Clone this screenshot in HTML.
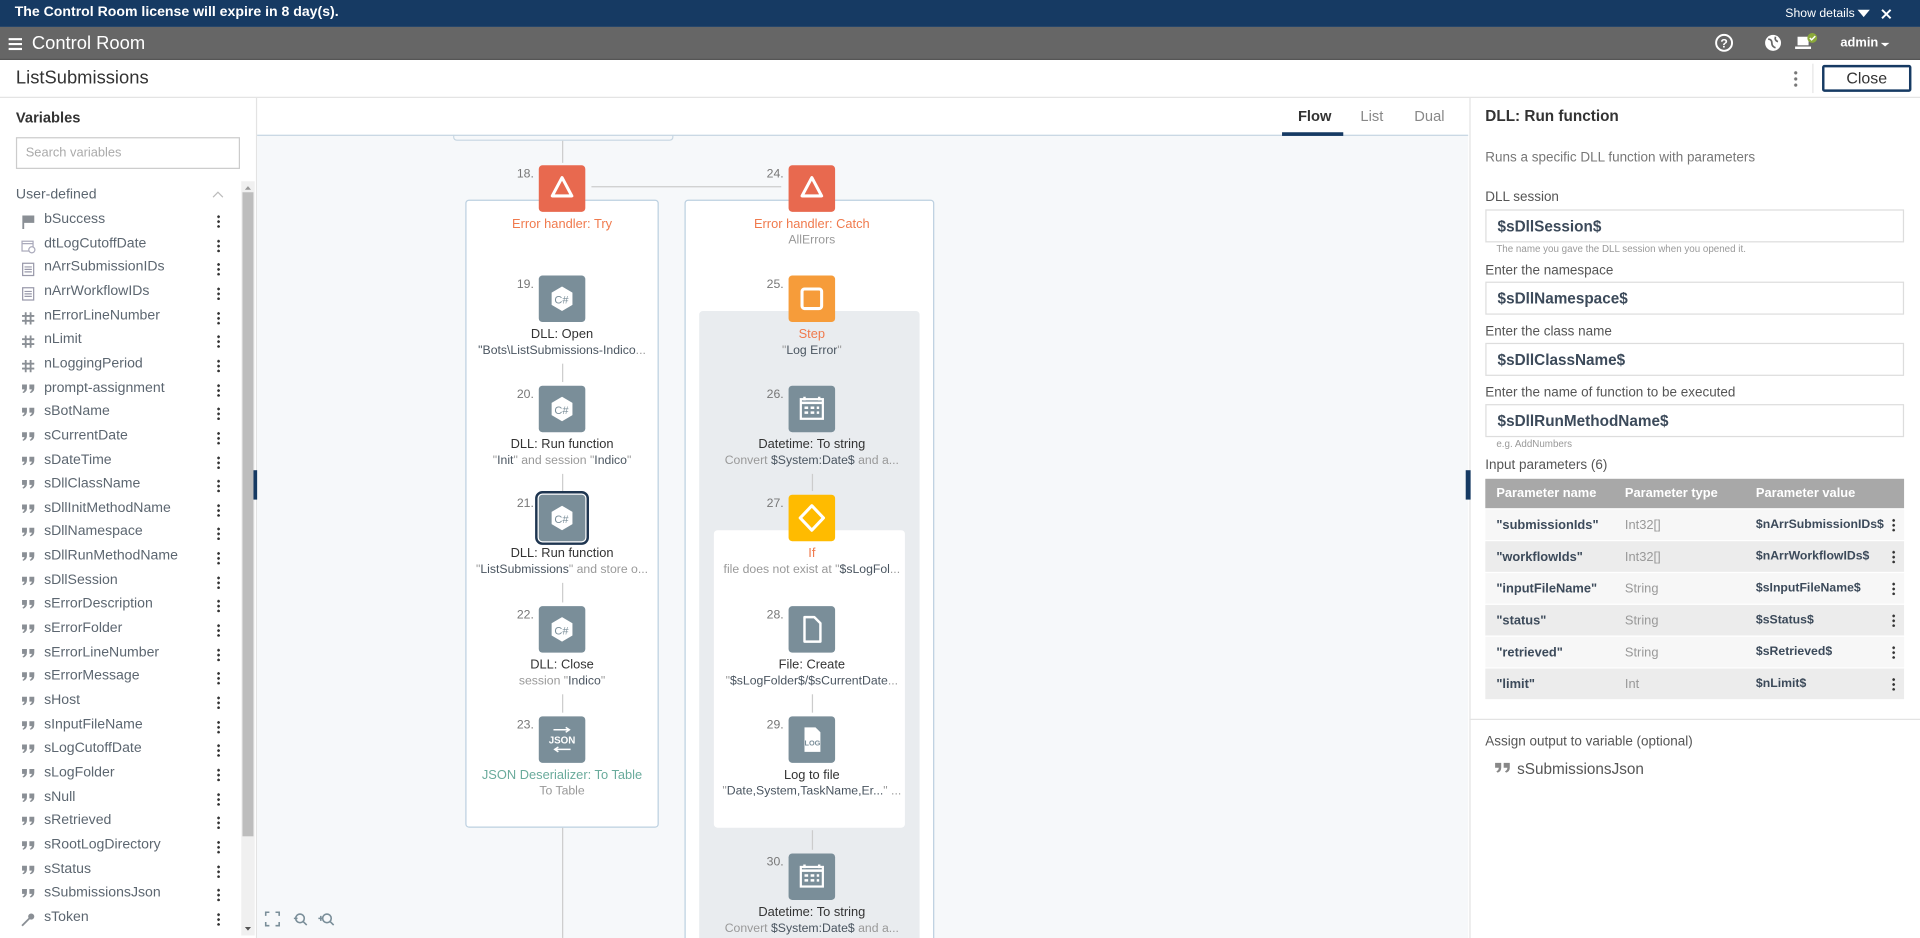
<!DOCTYPE html>
<html><head><meta charset="utf-8">
<style>
*{box-sizing:border-box;margin:0;padding:0}
html,body{width:1920px;height:937px;overflow:hidden;background:#fff}
#s{position:absolute;left:0;top:0;width:1568px;height:766px;overflow:hidden;transform:scale(1.22449);transform-origin:0 0;font-family:"Liberation Sans",sans-serif;color:#333;font-size:11px}
.a{position:absolute}
.var{position:absolute;left:36px;font-size:11.5px;color:#5c6670}
.vi{position:absolute;left:17px}
.kb{position:absolute;left:177px;width:3px;height:11px;background:radial-gradient(circle,#333 1px,transparent 1.2px) 0 0/3px 4px repeat-y}
.ic{position:absolute;width:38px;height:38px;border-radius:3px;background:#7a8e99}
.num{position:absolute;width:30px;text-align:right;font-size:10px;color:#777}
.tt{position:absolute;width:200px;text-align:center;font-size:10.5px;color:#333}
.st{position:absolute;width:200px;text-align:center;font-size:10px;color:#999;white-space:nowrap}
.st b{color:#4a5560;font-weight:normal}
.lbl{position:absolute;left:1213px;font-size:11px;color:#555}
.inp{position:absolute;left:1213px;width:342px;height:27px;border:1px solid #ddd;padding:6px 9px;font-size:12.5px;color:#3c4a5a;font-weight:bold}
.hint{position:absolute;left:1222px;font-size:8px;color:#999}
.row{position:absolute;left:1213px;width:342px;height:25px;font-size:10.5px}
.row span{position:absolute;top:7px}
.arr{position:absolute;width:1px;background:#ccc}
</style></head><body><div id="s">
<!-- banner -->
<div class="a" style="left:0;top:0;width:1568px;height:22px;background:#163a63"></div>
<div class="a" style="left:12px;top:4px;color:#fff;font-weight:bold;font-size:11.5px">The Control Room license will expire in 8 day(s).</div>
<div class="a" style="left:1458px;top:6px;color:#fff;font-size:10px">Show details</div>
<svg class="a" style="left:1516px;top:7px" width="40" height="10"><path d="M1 1h10l-5 6z" fill="#fff"/><path d="M21 1l7 7M28 1l-7 7" stroke="#fff" stroke-width="1.6"/></svg>
<!-- header -->
<div class="a" style="left:0;top:22px;width:1568px;height:27px;background:#666;border-bottom:1px solid #555"></div>
<svg class="a" style="left:7px;top:31px" width="11" height="10"><path d="M0 1h11M0 5h11M0 9h11" stroke="#fff" stroke-width="1.8"/></svg>
<div class="a" style="left:26px;top:27px;color:#fff;font-size:15px">Control Room</div>
<svg class="a" style="left:1400px;top:27px" width="150" height="18">
<circle cx="8" cy="8" r="6.5" fill="none" stroke="#fff" stroke-width="1.6"/><text x="8" y="12" font-size="10" font-weight="bold" fill="#fff" text-anchor="middle" font-family="Liberation Sans">?</text>
<circle cx="48" cy="8" r="6.5" fill="#fff"/><path d="M44 5q3 0 3 3t3 4M50 3q-1 3 2 4" stroke="#666" stroke-width="1.4" fill="none"/>
<rect x="68" y="3" width="9" height="7" fill="#fff"/><rect x="66" y="11" width="13" height="2" fill="#fff"/><circle cx="80" cy="4" r="4" fill="#8aa83a"/><path d="M78 4l1.5 1.5 3-3" stroke="#fff" fill="none" stroke-width="1.2"/>
<path d="M136 8h7l-3.5 3z" fill="#fff"/></svg>
<div class="a" style="left:1503px;top:29px;color:#fff;font-size:10.5px;font-weight:bold">admin</div>
<!-- title bar -->
<div class="a" style="left:13px;top:55px;font-size:15px;color:#333">ListSubmissions</div>
<div class="a" style="left:1465px;top:57px;width:3px;height:14px;background:radial-gradient(circle,#777 1.2px,transparent 1.5px) 0 0/3px 5px repeat-y"></div>
<div class="a" style="left:1480px;top:52px;width:1px;height:24px;background:#e5e5e5"></div>
<div class="a" style="left:1488px;top:53px;width:73px;height:22px;border:2px solid #163a63;border-radius:2px;text-align:center;font-size:13px;line-height:18px;color:#333">Close</div>
<div class="a" style="left:0;top:79px;width:1568px;height:1px;background:#e3e3e3"></div>
<!-- left panel -->
<div class="a" style="left:13px;top:89px;font-size:12px;font-weight:bold;color:#333">Variables</div>
<div class="a" style="left:13px;top:112px;width:183px;height:26px;border:1px solid #ccc;padding:6px 7px;font-size:10.5px;color:#aaa">Search variables</div>
<div class="a" style="left:13px;top:153px;font-size:11.5px;color:#5c6670">User-defined</div>
<svg class="a" style="left:173px;top:155px" width="10" height="7"><path d="M1 6l4-4 4 4" stroke="#bbb" fill="none"/></svg>
<div class="a" style="left:197px;top:148px;width:11px;height:616px;background:#f0f0f0"></div>
<div class="a" style="left:198px;top:157px;width:9px;height:526px;background:#bdbdbd"></div>
<svg class="a" style="left:198px;top:149px" width="9" height="615"><path d="M2 6l2.5-3 2.5 3z" fill="#999"/><path d="M2 608l2.5 3 2.5-3z" fill="#555"/></svg>
<div class="a" style="left:209px;top:80px;width:1px;height:686px;background:#e3e3e3"></div>
<div class="a" style="left:207px;top:384px;width:4px;height:24px;background:#163a63"></div>
<div id="vars"></div>
<!-- canvas -->
<div class="a" style="left:210px;top:110px;width:989px;height:656px;background:#f6f8fa;border-top:1px solid #c6d6e2"></div>
<div class="a" style="left:1060px;top:88px;font-size:12px;font-weight:bold;color:#333">Flow</div>
<div class="a" style="left:1047px;top:108px;width:50px;height:3px;background:#163a63"></div>
<div class="a" style="left:1111px;top:88px;font-size:12px;color:#888">List</div>
<div class="a" style="left:1155px;top:88px;font-size:12px;color:#888">Dual</div>
<div class="a" style="left:370px;top:110px;width:180px;height:5px;border:1px solid #c6d6e2;border-top:none;border-radius:0 0 3px 3px"></div>
<div class="arr" style="left:459px;top:115px;height:18px"></div>
<div class="a" style="left:483px;top:152px;width:155px;height:1px;background:#ccc"></div>
<!-- containers -->
<div class="a" style="left:380px;top:163px;width:158px;height:513px;background:#fff;border:1.5px solid #bcd0e0;border-radius:3px"></div>
<div class="a" style="left:559px;top:163px;width:204px;height:620px;background:#fff;border:1.5px solid #bcd0e0;border-radius:3px"></div>
<div class="a" style="left:571px;top:254px;width:180px;height:530px;background:#e9ecef;border-radius:3px"></div>
<div class="a" style="left:583px;top:433px;width:156px;height:243px;background:#fff;border-radius:3px"></div>
<div class="arr" style="left:459px;top:676px;height:90px"></div>
<div id="nodes"></div>
<svg class="a" style="left:216px;top:744px" width="60" height="14"><path d="M1 4V1h3M9 1h3v3M12 9v3H9M4 12H1V9" stroke="#7a8e99" fill="none" stroke-width="1.3"/><circle cx="29" cy="6" r="3.5" stroke="#7a8e99" fill="none" stroke-width="1.3"/><path d="M31.5 8.5l3 3M24 6h3" stroke="#7a8e99" stroke-width="1.3"/><circle cx="51" cy="6" r="3.5" stroke="#7a8e99" fill="none" stroke-width="1.3"/><path d="M53.5 8.5l3 3M46 4v4M44 6h4" stroke="#7a8e99" stroke-width="1.3"/></svg>
<!-- right panel -->
<div class="a" style="left:1200px;top:80px;width:1px;height:686px;background:#e3e3e3"></div>
<div class="a" style="left:1197px;top:384px;width:4px;height:24px;background:#163a63"></div>
<div class="a" style="left:1213px;top:88px;font-size:12.5px;font-weight:bold;color:#333">DLL: Run function</div>
<div class="lbl" style="top:123px;color:#777">Runs a specific DLL function with parameters</div>
<div class="lbl" style="top:155px">DLL session</div>
<div class="inp" style="top:171px">$sDllSession$</div>
<div class="hint" style="top:199px">The name you gave the DLL session when you opened it.</div>
<div class="lbl" style="top:215px">Enter the namespace</div>
<div class="inp" style="top:230px">$sDllNamespace$</div>
<div class="lbl" style="top:265px">Enter the class name</div>
<div class="inp" style="top:280px">$sDllClassName$</div>
<div class="lbl" style="top:315px">Enter the name of function to be executed</div>
<div class="inp" style="top:330px">$sDllRunMethodName$</div>
<div class="hint" style="top:358px">e.g. AddNumbers</div>
<div class="lbl" style="top:374px">Input parameters (6)</div>
<div class="row" style="top:391px;height:24px;background:#a8a8a8;color:#fff;font-weight:bold"><span style="left:9px;top:6px">Parameter name</span><span style="left:114px;top:6px">Parameter type</span><span style="left:221px;top:6px">Parameter value</span></div>
<div id="rows"></div>
<div class="a" style="left:1200px;top:587px;width:368px;height:1px;background:#e3e3e3"></div>
<div class="lbl" style="top:600px">Assign output to variable (optional)</div>
<svg class="a" style="left:1220px;top:622px" width="14" height="10"><path d="M1 1h5v4q0 3-3 4l-1-1q2-1 2-3H1zM8 1h5v4q0 3-3 4l-1-1q2-1 2-3H8z" fill="#888"/></svg>
<div class="a" style="left:1239px;top:621px;font-size:12.5px;color:#555">sSubmissionsJson</div>
</div>
<script>
var Q='<svg width="12" height="9"><path d="M1 1h4v3q0 3-3 4l-.7-.8q1.7-1 1.7-2.2H1zM7 1h4v3q0 3-3 4l-.7-.8q1.7-1 1.7-2.2H7z" fill="#8a8f95"/></svg>';
var I={f:'<svg width="12" height="12"><path d="M2 1v11" stroke="#8a8f95" stroke-width="1.5"/><path d="M2 1h9v6H2z" fill="#8a8f95"/></svg>',
c:'<svg width="12" height="12"><rect x="1" y="2" width="9" height="8" fill="none" stroke="#aab" stroke-width="1"/><path d="M1 4h9" stroke="#aab"/><circle cx="9" cy="9" r="2.5" fill="#fff" stroke="#aab"/></svg>',
l:'<svg width="12" height="12"><rect x="1.5" y="1" width="9" height="10" fill="none" stroke="#99a" stroke-width="1"/><path d="M3 4h6M3 6h6M3 8h6" stroke="#99a"/></svg>',
h:'<svg width="12" height="12"><path d="M4 1v10M8 1v10M1 4h10M1 8h10" stroke="#8a8f95" stroke-width="1.5"/></svg>',
q:Q,
k:'<svg width="12" height="12"><circle cx="8.5" cy="3.5" r="2.5" fill="#8a8f95"/><path d="M7 5l-6 6" stroke="#8a8f95" stroke-width="1.5"/></svg>'};
var v=[["f","bSuccess"],["c","dtLogCutoffDate"],["l","nArrSubmissionIDs"],["l","nArrWorkflowIDs"],["h","nErrorLineNumber"],["h","nLimit"],["h","nLoggingPeriod"],["q","prompt-assignment"],["q","sBotName"],["q","sCurrentDate"],["q","sDateTime"],["q","sDllClassName"],["q","sDllInitMethodName"],["q","sDllNamespace"],["q","sDllRunMethodName"],["q","sDllSession"],["q","sErrorDescription"],["q","sErrorFolder"],["q","sErrorLineNumber"],["q","sErrorMessage"],["q","sHost"],["q","sInputFileName"],["q","sLogCutoffDate"],["q","sLogFolder"],["q","sNull"],["q","sRetrieved"],["q","sRootLogDirectory"],["q","sStatus"],["q","sSubmissionsJson"],["k","sToken"]];
var h="";v.forEach(function(e,i){var y=173+i*19.65;h+='<div class="vi" style="top:'+(y+2)+'px">'+I[e[0]]+'</div><div class="var" style="top:'+y+'px">'+e[1]+'</div><div class="kb" style="top:'+(y+2)+'px"></div>';});
document.getElementById("vars").outerHTML=h;
var tri='<path d="M19 10l8 15H11z" stroke="#fff" stroke-width="2.5" fill="none" stroke-linejoin="round"/>';
var cs='<path d="M19 9l8.5 5v10l-8.5 5-8.5-5V14z" fill="#fff"/><text x="18.5" y="23" font-size="9" fill="#7a8e99" text-anchor="middle" font-family="Liberation Sans">C#</text>';
var sq='<rect x="11" y="11" width="16" height="16" rx="2" stroke="#fff" stroke-width="2.5" fill="none"/>';
var cal='<rect x="10" y="11" width="18" height="16" stroke="#fff" stroke-width="1.8" fill="none"/><path d="M10 14h18M13 9v3M25 9v3" stroke="#fff" stroke-width="2"/><path d="M13 17h3v2h-3zM18 17h3v2h-3zM23 17h2v2h-2zM13 21h3v2h-3zM18 21h3v2h-3zM23 21h2v2h-2z" fill="#fff"/>';
var dia='<path d="M19 9l9.5 10L19 29 9.5 19z" stroke="#fff" stroke-width="2.5" fill="none" stroke-linejoin="round"/>';
var fil='<path d="M13 9h8l5 5v15H13z" stroke="#fff" stroke-width="2" fill="none" stroke-linejoin="round"/>';
var log='<path d="M13 9h9l4 4v16H13z" fill="#fff"/><text x="19.5" y="24" font-size="6" fill="#7a8e99" text-anchor="middle" font-family="Liberation Sans" font-weight="bold">LOG</text>';
var js='<path d="M12 11h13M22 9l3 2-3 2M26 27H13M16 25l-3 2 3 2" stroke="#fff" stroke-width="1.2" fill="none"/><text x="19" y="22" font-size="8" fill="#fff" text-anchor="middle" font-family="Liberation Sans" font-weight="bold">JSON</text>';
var N=[
[440,135,"18.","#e8694f",tri,"Error handler: Try","",1],
[644,135,"24.","#e8694f",tri,"Error handler: Catch","AllErrors",1],
[440,225,"19.","#7a8e99",cs,"DLL: Open","<b>\"Bots\\ListSubmissions-Indico</b>..."],
[440,315,"20.","#7a8e99",cs,"DLL: Run function","\"<b>Init</b>\" and session \"<b>Indico</b>\""],
[440,404,"21.","#7a8e99",cs,"DLL: Run function","\"<b>ListSubmissions</b>\" and store o...",0,1],
[440,495,"22.","#7a8e99",cs,"DLL: Close","session \"<b>Indico</b>\""],
[440,585,"23.","#7a8e99",js,"JSON Deserializer: To Table","To Table",2],
[644,225,"25.","#f69c3a",sq,"Step","\"<b>Log Error</b>\"",1],
[644,315,"26.","#7a8e99",cal,"Datetime: To string","Convert <b>$System:Date$</b> and a..."],
[644,404,"27.","#ffbb00",dia,"If","file does not exist at \"<b>$sLogFol</b>...",1],
[644,495,"28.","#7a8e99",fil,"File: Create","\"<b>$sLogFolder$/$sCurrentDate</b>..."],
[644,585,"29.","#7a8e99",log,"Log to file","\"<b>Date,System,TaskName,Er...</b>\" ..."],
[644,697,"30.","#7a8e99",cal,"Datetime: To string","Convert <b>$System:Date$</b> and a..."]];
h="";
[[459,225,315],[459,315,404],[459,404,495],[459,495,585],[663,315,404],[663,495,585],[663,585,697]].forEach(function(a){var t=a[1]+72,b=a[2]-3;if(a[1]==585&&a[0]==663)t=678;h+='<div class="arr" style="left:'+a[0]+'px;top:'+t+'px;height:'+(b-t)+'px"></div>';});
N.forEach(function(n){var x=n[0],y=n[1];
h+='<div class="num" style="left:'+(x-34)+'px;top:'+(y+2)+'px">'+n[2]+'</div>';
h+='<svg class="ic" style="left:'+x+'px;top:'+y+'px;background:'+n[3]+(n[8]?';outline:2px solid #1e3550;outline-offset:1px':'')+'" width="38" height="38">'+n[4]+'</svg>';
var c=n[7]==1?'#f07a4d':(n[7]==2?'#6aab9c':'#333');
h+='<div class="tt" style="left:'+(x+19-100)+'px;top:'+(y+42)+'px;color:'+c+'">'+n[5]+'</div>';
h+='<div class="st" style="left:'+(x+19-100)+'px;top:'+(y+56)+'px">'+n[6]+'</div>';});
document.getElementById("nodes").outerHTML=h;
var R=[["submissionIds","Int32[]","$nArrSubmissionIDs$"],["workflowIds","Int32[]","$nArrWorkflowIDs$"],["inputFileName","String","$sInputFileName$"],["status","String","$sStatus$"],["retrieved","String","$sRetrieved$"],["limit","Int","$nLimit$"]];
h="";R.forEach(function(r,i){h+='<div class="row" style="top:'+(416+i*26)+'px;background:'+(i%2?'#ececec':'#f7f7f7')+'"><span style="left:9px;color:#3c4a5a;font-weight:bold">"'+r[0]+'"</span><span style="left:114px;color:#999">'+r[1]+'</span><span style="left:221px;color:#3c4a5a;font-weight:bold;font-size:10px">'+r[2]+'</span><span style="left:332px;top:7px;width:3px;height:11px;background:radial-gradient(circle,#333 1px,transparent 1.2px) 0 0/3px 4px repeat-y"></span></div>';});
document.getElementById("rows").outerHTML=h;
</script>
</body></html>
